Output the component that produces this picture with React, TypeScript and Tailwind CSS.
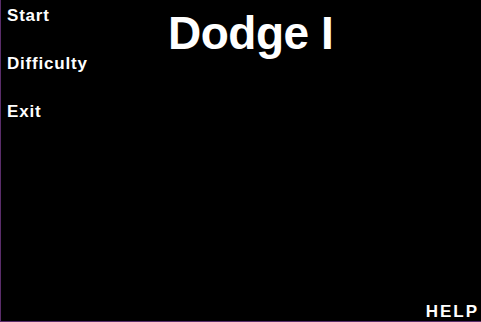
import React from 'react';

const menuItems = ['Start', 'Difficulty', 'Exit'];

export default function App() {
  return (
    <div
      className="w-[481px] h-[322px] bg-black text-white flex flex-col border-l border-b border-[#5a2d6a] overflow-hidden"
      style={{ fontFamily: '"Liberation Sans", Arial, sans-serif' }}
    >
      {/* Menu + Title */}
      <div className="flex">
        <div className="w-[167px] flex flex-col gap-[28px] pt-[6px] pl-[6px]">
          {menuItems.map((item) => (
            <div key={item} className="text-[17px] leading-[20px] font-bold tracking-[0.8px]">
              {item}
            </div>
          ))}
        </div>
        <h1 className="pt-[10px] text-[46px] leading-[46px] font-bold tracking-[-0.5px]">Dodge I</h1>
      </div>

      {/* Help */}
      <div className="flex-1 flex items-end justify-end pr-[2px] pb-[1px]">
        <span className="text-[17px] leading-[17px] font-bold tracking-[2px]">HELP</span>
      </div>
    </div>
  );
}
